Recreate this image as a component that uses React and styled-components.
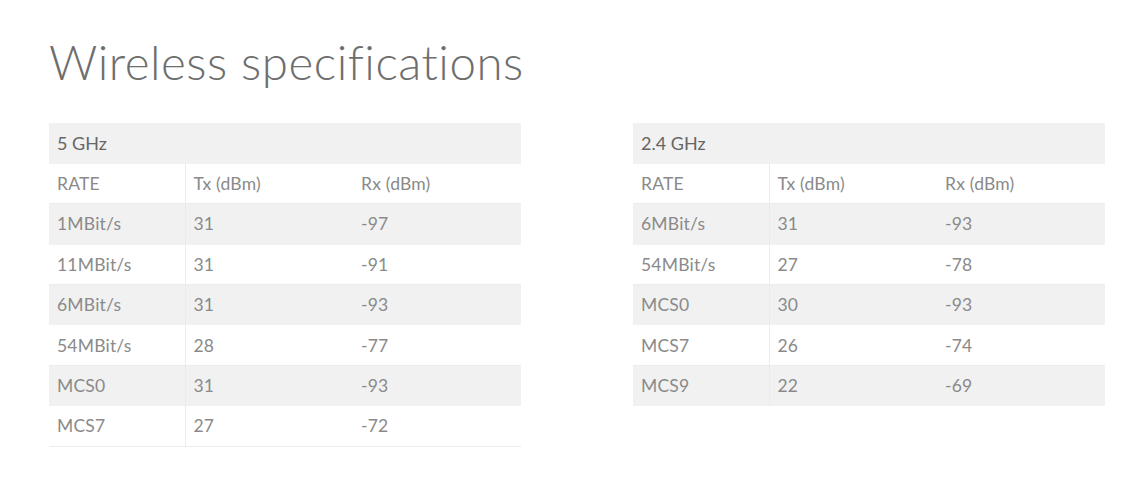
import React from 'react';
import styled, { createGlobalStyle } from 'styled-components';

const GlobalStyle = createGlobalStyle`
  html, body {
    margin: 0;
    padding: 0;
    background: #ffffff;
  }
  body {
    font-family: 'Lato', 'Open Sans', sans-serif;
  }
`;

const Page = styled.div`
  padding: 32px 49px 0;
`;

const Title = styled.h1`
  margin: 0 0 31px;
  font-family: 'Lato', sans-serif;
  font-weight: 300;
  font-size: 47.5px;
  line-height: 60px;
  color: #6e6e6e;
  letter-spacing: 0.5px;
`;

const Tables = styled.div`
  display: grid;
  grid-template-columns: 472px 472px;
  column-gap: 112px;
  align-items: start;
`;

const Table = styled.table`
  width: 100%;
  border-collapse: collapse;
  table-layout: fixed;
`;

const Row = styled.tr`
  height: 40.4px;
  background: ${(p) => (p.$shaded ? '#f1f1f1' : '#ffffff')};
  border-bottom: 1px solid ${(p) => (p.$shaded ? '#f1f1f1' : '#ececec')};
`;

const Heading = styled.th`
  text-align: left;
  padding: 0 8px;
  font-weight: 400;
  font-size: 18px;
  color: #666666;
`;

const Cell = styled.td`
  padding: 0 8px;
  font-size: 17.5px;
  font-weight: 400;
  color: #8a8a8a;
  border-right: ${(p) => (p.$divider ? '1px solid #ebebeb' : 'none')};
  white-space: nowrap;
  letter-spacing: 0.2px;
`;

const specs = [
  {
    band: '5 GHz',
    rows: [
      ['1MBit/s', '31', '-97'],
      ['11MBit/s', '31', '-91'],
      ['6MBit/s', '31', '-93'],
      ['54MBit/s', '28', '-77'],
      ['MCS0', '31', '-93'],
      ['MCS7', '27', '-72'],
    ],
  },
  {
    band: '2.4 GHz',
    rows: [
      ['6MBit/s', '31', '-93'],
      ['54MBit/s', '27', '-78'],
      ['MCS0', '30', '-93'],
      ['MCS7', '26', '-74'],
      ['MCS9', '22', '-69'],
    ],
  },
];

function SpecTable({ band, rows }) {
  const all = [['RATE', 'Tx (dBm)', 'Rx (dBm)'], ...rows];

  return (
    <Table>
      <colgroup>
        <col style={{ width: 136 }} />
        <col style={{ width: 168 }} />
        <col />
      </colgroup>
      <thead>
        <Row $shaded>
          <Heading colSpan={3}>{band}</Heading>
        </Row>
      </thead>
      <tbody>
        {all.map((r, i) => (
          <Row key={r[0]} $shaded={i % 2 === 1}>
            <Cell $divider>{r[0]}</Cell>
            <Cell>{r[1]}</Cell>
            <Cell>{r[2]}</Cell>
          </Row>
        ))}
      </tbody>
    </Table>
  );
}

export default function App() {
  return (
    <Page>
      <GlobalStyle />
      <Title>Wireless specifications</Title>
      <Tables>
        {specs.map((s) => (
          <SpecTable key={s.band} band={s.band} rows={s.rows} />
        ))}
      </Tables>
    </Page>
  );
}
